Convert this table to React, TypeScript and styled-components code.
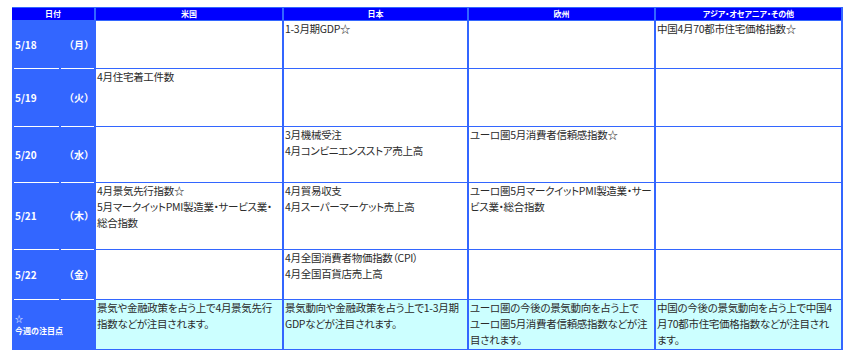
import styled, { createGlobalStyle } from "styled-components";

const GlobalStyle = createGlobalStyle`
  html, body {
    margin: 0;
    padding: 0;
    background: #ffffff;
  }
  body {
    font-family: "Noto Sans CJK JP", "Noto Sans", sans-serif;
  }
`;

const Page = styled.div`
  padding: 7px 0 0 12px;
`;

const Table = styled.div`
  display: grid;
  width: max-content;
  grid-template-columns: 82px 186px 183px 185px 185px;
  grid-template-rows: 12px 48px 58px 56px 67px 50px 50px;
  column-gap: 2px;
  padding: 1px 2px 1px 0;
  background: #3366ff;
`;

const HeadCell = styled.div`
  background: #0000ff;
  color: #ffffff;
  font-size: 8px;
  font-weight: 700;
  font-feature-settings: "palt";
  display: flex;
  align-items: center;
  justify-content: center;
  line-height: 1;
  white-space: nowrap;
`;

const DateCell = styled.div`
  display: grid;
  grid-template-columns: 45px 1fr;
  column-gap: 2px;
  padding-left: 2px;
  color: #ffffff;
  font-weight: 700;
`;

const DatePart = styled.div<{ $first?: boolean; $pad?: number }>`
  border-top: 1px solid ${(p) => (p.$first ? "transparent" : "#ffffff")};
  display: flex;
  flex-direction: column;
  justify-content: center;
  padding-left: ${(p) => p.$pad ?? 0}px;
  font-size: 10px;
  line-height: 1;
  white-space: nowrap;
`;

const NoteLabel = styled.span`
  font-size: 8px;
  line-height: 12px;
  font-feature-settings: "palt";
`;

const Cell = styled.div<{ $note?: boolean }>`
  border-top: 1px solid #3366ff;
  background: ${(p) => (p.$note ? "#ccffff" : "#ffffff")};
  color: #2b2b2b;
  font-size: 10.5px;
  letter-spacing: -0.3px;
  line-height: 16px;
  font-feature-settings: "palt";
  padding: 0 0 0 1px;
  white-space: nowrap;
  overflow: hidden;
`;

type Row = { date: string; day: string; cells: string[][] };

const rows: Row[] = [
  { date: "5/18", day: "（月）", cells: [[], ["1-3月期GDP☆"], [], ["中国4月70都市住宅価格指数☆"]] },
  { date: "5/19", day: "（火）", cells: [["4月住宅着工件数"], [], [], []] },
  {
    date: "5/20",
    day: "（水）",
    cells: [[], ["3月機械受注", "4月コンビニエンスストア売上高"], ["ユーロ圏5月消費者信頼感指数☆"], []],
  },
  {
    date: "5/21",
    day: "（木）",
    cells: [
      ["4月景気先行指数☆", "5月マークイットPMI製造業・サービス業・", "総合指数"],
      ["4月貿易収支", "4月スーパーマーケット売上高"],
      ["ユーロ圏5月マークイットPMI製造業・サー", "ビス業・総合指数"],
      [],
    ],
  },
  {
    date: "5/22",
    day: "（金）",
    cells: [[], ["4月全国消費者物価指数（CPI）", "4月全国百貨店売上高"], [], []],
  },
];

const notes: string[][] = [
  ["景気や金融政策を占う上で4月景気先行", "指数などが注目されます。"],
  ["景気動向や金融政策を占う上で1-3月期", "GDPなどが注目されます。"],
  ["ユーロ圏の今後の景気動向を占う上で", "ユーロ圏5月消費者信頼感指数などが注", "目されます。"],
  ["中国の今後の景気動向を占う上で中国4", "月70都市住宅価格指数などが注目され", "ます。"],
];

const heads = ["日付", "米国", "日本", "欧州", "アジア・オセアニア・その他"];

function Lines({ lines }: { lines: string[] }) {
  return (
    <>
      {lines.map((l, i) => (
        <div key={i}>{l}</div>
      ))}
    </>
  );
}

export default function App() {
  return (
    <>
      <GlobalStyle />
      <Page>
        <Table>
          {heads.map((h) => (
            <HeadCell key={h}>{h}</HeadCell>
          ))}
          {rows.map((r, ri) => [
            <DateCell key={r.date}>
              <DatePart $first={ri === 0} $pad={1}>{r.date}</DatePart>
              <DatePart $first={ri === 0} $pad={3}>{r.day}</DatePart>
            </DateCell>,
            ...r.cells.map((c, ci) => (
              <Cell key={r.date + ci}>
                <Lines lines={c} />
              </Cell>
            )),
          ])}
          <DateCell>
            <DatePart $pad={1}>
              <NoteLabel>☆</NoteLabel>
              <NoteLabel>今週の注目点</NoteLabel>
            </DatePart>
            <DatePart />
          </DateCell>
          {notes.map((n, i) => (
            <Cell key={"n" + i} $note>
              <Lines lines={n} />
            </Cell>
          ))}
        </Table>
      </Page>
    </>
  );
}
